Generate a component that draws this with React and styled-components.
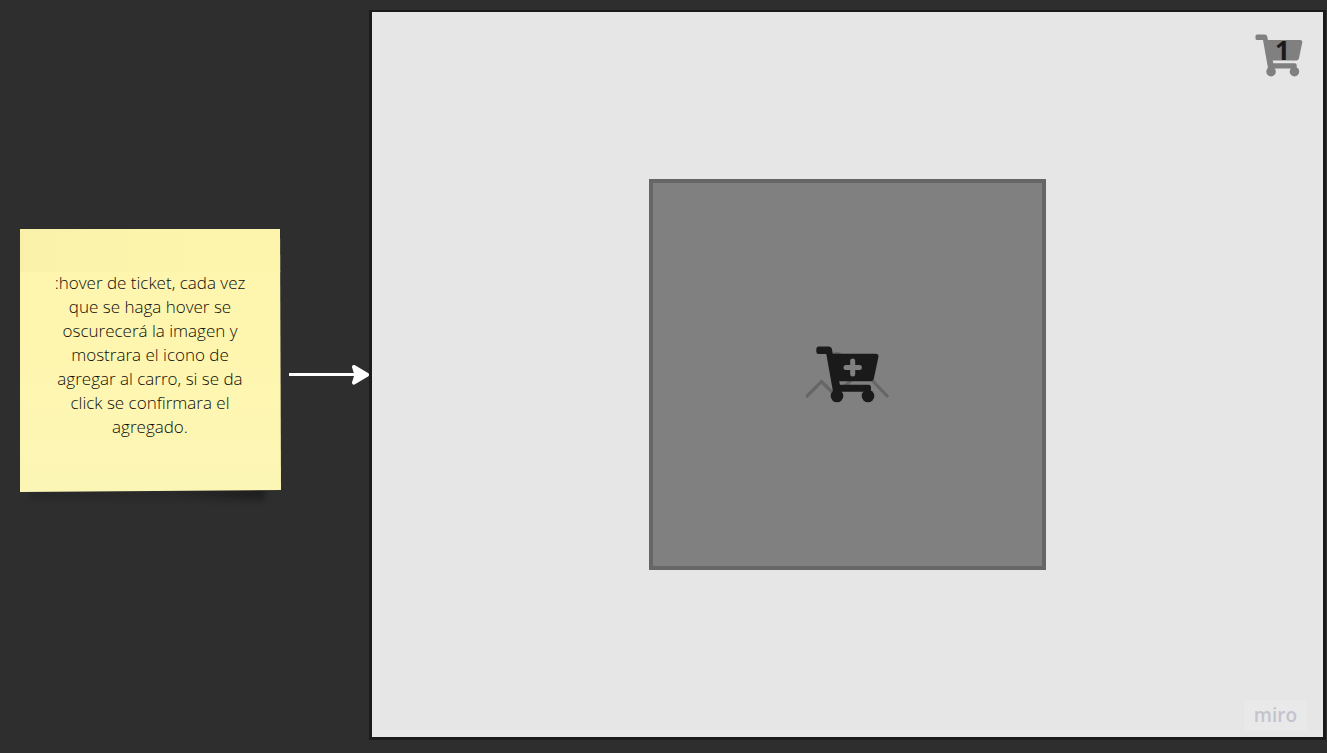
import React from "react";
import styled, { createGlobalStyle } from "styled-components";

const GlobalStyle = createGlobalStyle`
  *, *::before, *::after { box-sizing: border-box; }
  body {
    margin: 0;
    background: #2e2e2e;
    font-family: "Open Sans", "Noto Sans", sans-serif;
  }
`;

const Board = styled.main`
  display: grid;
  grid-template-columns: 262px 88px minmax(0, 1fr);
  min-height: 100vh;
  padding: 10px 1px 13px 19px;
`;

const NoteWrap = styled.aside`
  position: relative;
  align-self: center;
  margin-bottom: 30px;

  &::after {
    content: "";
    position: absolute;
    z-index: 0;
    left: 12px;
    right: 16px;
    bottom: -8px;
    height: 20px;
    background: linear-gradient(90deg, #292929, #2a2a2a 60%, #1e1e1e);
    filter: blur(3px);
  }
`;

const Note = styled.p`
  position: relative;
  z-index: 1;
  display: flex;
  align-items: center;
  min-height: 264px;
  margin: 0;
  padding: 0 30px 10px;
  background:
    linear-gradient(90deg, #f9f1aa, #fef5ad 70%) top / 100% 44px no-repeat,
    linear-gradient(180deg, #fef5ad 0%, #fef6b0 55%, #fcf6b6 100%);
  clip-path: polygon(1px 1px, 261px 1px, 100% 262px, 1px 100%);
  color: #0c0c08;
  font-size: 17px;
  font-weight: 300;
  line-height: 24px;
  text-align: center;
`;

const ArrowSlot = styled.div`
  display: flex;
  align-items: center;
  justify-content: flex-end;

  svg { display: block; }
`;

const Frame = styled.section`
  display: grid;
  grid-template-rows: minmax(0, 1fr) auto minmax(0, 1fr);
  border: 3px solid #1a1a1a;
  border-top-width: 2px;
  background: #e6e6e6;
`;

const FrameHeader = styled.header`
  display: flex;
  justify-content: flex-end;
  align-items: flex-start;
  padding: 22px 20px 0;
`;

const FrameFooter = styled.footer`
  display: flex;
  justify-content: flex-end;
  align-items: flex-end;
  padding: 0 16px 6px;
`;

const PlainButton = styled.button`
  position: relative;
  padding: 0;
  border: 0;
  background: none;
  font: inherit;
  cursor: pointer;

  svg { display: block; }
`;

const Count = styled.span`
  position: absolute;
  top: 4px;
  left: 20px;
  color: #1a1a1a;
  font-size: 26px;
  line-height: 24px;
  font-weight: 700;
`;

const TicketTile = styled(PlainButton)`
  display: grid;
  place-items: center;
  justify-self: center;
  width: 397px;
  height: 391px;
  border: 4px solid #666;
  background: #808080;
`;

const Brand = styled.span`
  padding: 3px 10px;
  background: #e9e9e9;
  color: #c3c3cd;
  font-size: 19px;
  line-height: 25px;
  font-weight: 600;
`;

function CartShape() {
  return (
    <>
      <path d="M2.5.5H12.5Q15.5.5 16 3.5L16.8 7.8H59.5Q63 7.8 62.4 11L58 32Q57.3 35.2 54.5 35.2H23.2L24 38.8H52.5Q55 38.8 55 41.3V43.3Q55 45.8 52.5 45.8H17L10.3 8H2.5Q.3 8 .3 5.5V3Q.3.5 2.5.5Z" />
      <circle cx="21" cy="50" r="6.3" />
      <circle cx="52" cy="50" r="6.3" />
    </>
  );
}

function Cart() {
  return (
    <svg width="48" height="43" viewBox="0 0 63 57" fill="#808080" aria-hidden="true">
      <CartShape />
    </svg>
  );
}

function AddToCartPicture() {
  return (
    <svg width="84" height="57" viewBox="0 0 84 57" aria-hidden="true">
      <g fill="none" stroke="#666" strokeWidth="3.2">
        <path d="M0 51L15.5 35.5L29 49L56.5 24L82 51" />
        <circle cx="31" cy="13.5" r="6" />
      </g>
      <g transform="translate(10 0)" fill="#1a1a1a">
        <CartShape />
        <path
          d="M36.7 14.9V28.1M30 21.5H43.4"
          stroke="#808080"
          strokeWidth="5"
          strokeLinecap="round"
        />
      </g>
    </svg>
  );
}

function Arrow() {
  return (
    <svg width="81" height="22" viewBox="0 0 81 22" aria-hidden="true">
      <path d="M1 10.5H70" stroke="#fff" strokeWidth="3" />
      <path
        d="M66 3L79 10.8L66 18.6L68.5 10.8Z"
        fill="#fff"
        stroke="#fff"
        strokeWidth="4"
        strokeLinejoin="round"
      />
    </svg>
  );
}

export default function App() {
  return (
    <>
      <GlobalStyle />
      <Board>
        <NoteWrap>
          <Note>
            :hover de ticket, cada vez que se haga hover se oscurecerá la imagen y
            mostrara el icono de agregar al carro, si se da click se confirmara el
            agregado.
          </Note>
        </NoteWrap>
        <ArrowSlot>
          <Arrow />
        </ArrowSlot>
        <Frame>
          <FrameHeader>
            <PlainButton type="button" aria-label="Carro: 1">
              <Cart />
              <Count>1</Count>
            </PlainButton>
          </FrameHeader>
          <TicketTile type="button" aria-label="Agregar al carro">
            <AddToCartPicture />
          </TicketTile>
          <FrameFooter>
            <Brand>miro</Brand>
          </FrameFooter>
        </Frame>
      </Board>
    </>
  );
}
